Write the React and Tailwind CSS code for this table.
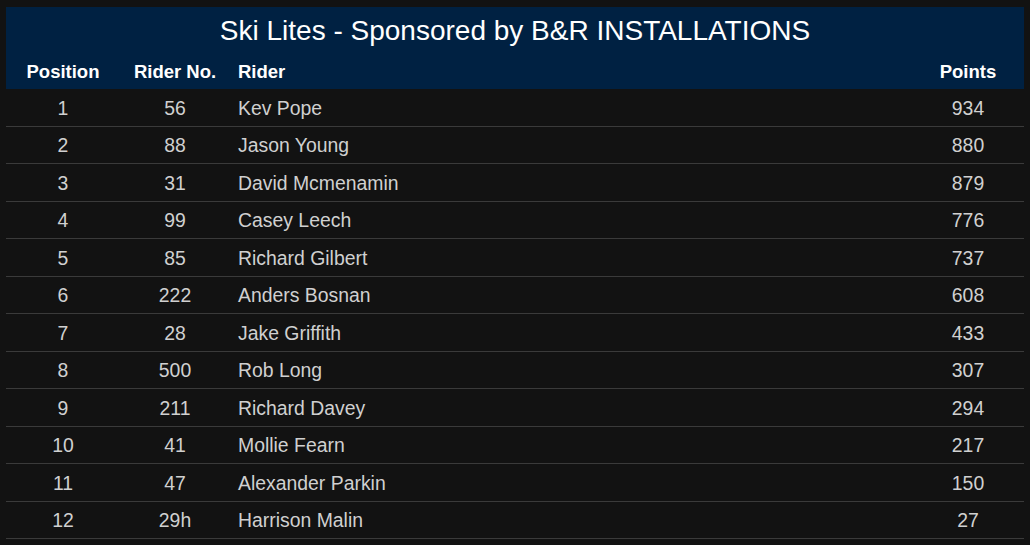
const rows = [
  [1, "56", "Kev Pope", 934],
  [2, "88", "Jason Young", 880],
  [3, "31", "David Mcmenamin", 879],
  [4, "99", "Casey Leech", 776],
  [5, "85", "Richard Gilbert", 737],
  [6, "222", "Anders Bosnan", 608],
  [7, "28", "Jake Griffith", 433],
  [8, "500", "Rob Long", 307],
  [9, "211", "Richard Davey", 294],
  [10, "41", "Mollie Fearn", 217],
  [11, "47", "Alexander Parkin", 150],
  [12, "29h", "Harrison Malin", 27],
];

export default function App() {
  return (
    <div className="w-[1030px] h-[545px] bg-[#121212] pt-[7px] px-[6px] overflow-hidden" style={{ fontFamily: '"Liberation Sans", Arial, sans-serif' }}>
      <div className="bg-[#002142] text-white">
        <div className="h-[46px] flex items-center justify-center text-[28px] leading-none pt-[1px]">
          Ski Lites - Sponsored by B&amp;R INSTALLATIONS
        </div>
        <div className="grid grid-cols-[114px_110px_1fr_112px] h-[36px] items-center text-[18.5px] font-semibold leading-none pt-[3px]">
          <div className="text-center">Position</div>
          <div className="text-center">Rider No.</div>
          <div className="pl-[8px]">Rider</div>
          <div className="text-center">Points</div>
        </div>
      </div>
      <div>
        {rows.map((r) => (
          <div
            key={r[0]}
            className="grid grid-cols-[114px_110px_1fr_112px] h-[37.5px] items-center border-b border-[#3a3a3a] text-[19.4px] text-[#d0d0d0] leading-none pt-[2px]"
          >
            <div className="text-center">{r[0]}</div>
            <div className="text-center">{r[1]}</div>
            <div className="pl-[8px]">{r[2]}</div>
            <div className="text-center">{r[3]}</div>
          </div>
        ))}
      </div>
    </div>
  );
}
